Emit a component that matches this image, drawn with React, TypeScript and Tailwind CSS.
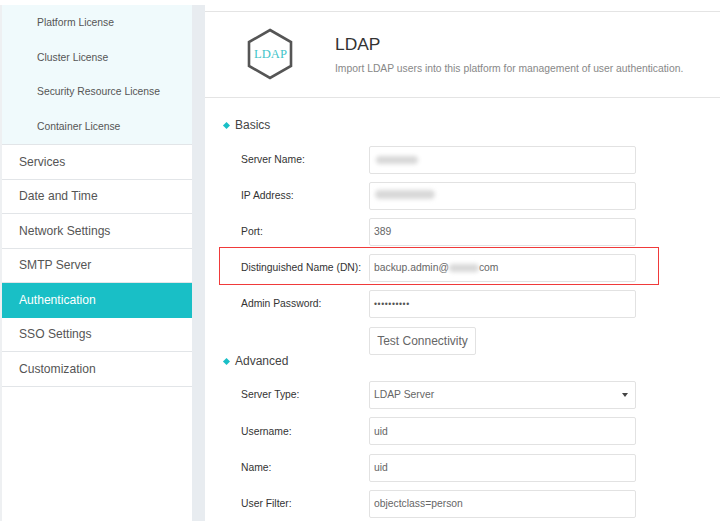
import React from 'react';

const subItems = ['Platform License', 'Cluster License', 'Security Resource License', 'Container License'];
const navItems = ['Services', 'Date and Time', 'Network Settings', 'SMTP Server', 'Authentication', 'SSO Settings', 'Customization'];

const Blur = ({ className }: { className: string }) => (
   <span className={`inline-block rounded-full bg-[#d8d8d8] blur-[2px] ${className}`} />
);

const Row = ({ label, children }: { label: string; children: React.ReactNode }) => (
   <div className="flex h-[28px] items-center">
      <label className="w-[128px] shrink-0 text-[10.35px] text-[#333]">{label}</label>
      <div className="flex h-full w-[267px] items-center rounded-[2px] border border-[#e2e2e2] bg-white pl-[4px] text-[10.35px] text-[#666]">
         {children}
      </div>
   </div>
);

const SectionTitle = ({ title }: { title: string }) => (
   <div className="flex items-center gap-[6px] pl-[19px] text-[12px] leading-[14px] text-[#444]">
      <span className="h-[5px] w-[5px] rotate-45 bg-[#19bfc6]" />
      {title}
   </div>
);

const App = () => {
   return (
      <div className="relative flex h-[521px] w-[720px] overflow-hidden bg-white font-['Liberation_Sans',Arial,sans-serif]">
         <aside className="mt-[5px] w-[192px] shrink-0 border-l-2 border-[#eef0f2] bg-white">
            <div className="border-b border-[#e2e5e8] bg-[#f0fafc] pt-[1px]">
               {subItems.map((item) => (
                  <div key={item} className="flex h-[34.5px] items-center pl-[35px] text-[10.35px] text-[#555]">
                     {item}
                  </div>
               ))}
            </div>
            {navItems.map((item) => (
               <div
                  key={item}
                  className={
                     item === 'Authentication'
                        ? 'flex h-[34.5px] items-center bg-[#19bfc6] pl-[17px] text-[12.1px] text-white'
                        : 'flex h-[34.5px] items-center border-b border-[#e2e5e8] pl-[17px] text-[12.1px] text-[#555]'
                  }
               >
                  {item}
               </div>
            ))}
         </aside>

         <div className="mt-[5px] w-[13px] shrink-0 bg-[#e8ecf0]" />

         <main className="flex-1">
            <div className="mt-[11px] flex h-[87px] items-center border-y border-[#e4e4e4]">
               <svg width="50" height="54" viewBox="0 0 50 54" className="ml-[40px] mt-[-2px] shrink-0">
                  <polygon points="25,3 46,15 46,39 25,51 4,39 4,15" fill="none" stroke="#555" strokeWidth="2.6" />
                  <text x="25.5" y="31" textAnchor="middle" fontFamily="Liberation Serif, serif" fontSize="12.6" fill="#3fc4c9">
                     LDAP
                  </text>
               </svg>
               <div className="ml-[40px] mt-[-1px]">
                  <h1 className="text-[17.4px] leading-[20px] text-[#333]">LDAP</h1>
                  <p className="mt-[9px] text-[10.33px] leading-[12px] text-[#888]">
                     Import LDAP users into this platform for management of user authentication.
                  </p>
               </div>
            </div>

            <div className="pt-[20px]">
               <SectionTitle title="Basics" />
               <div className="mt-[14px] flex flex-col gap-[8px] pl-[36px]">
                  <Row label="Server Name:">
                     <Blur className="ml-[2px] h-[8px] w-[42px]" />
                  </Row>
                  <Row label="IP Address:">
                     <Blur className="ml-[1px] mt-[-4px] h-[9px] w-[60px]" />
                  </Row>
                  <Row label="Port:">389</Row>
                  <Row label="Distinguished Name (DN):">
                     backup.admin@
                     <Blur className="h-[8px] w-[30px]" />
                     com
                  </Row>
                  <Row label="Admin Password:">
                     <span className="text-[8.5px] tracking-[0.6px] text-[#555]">••••••••••</span>
                  </Row>
               </div>
               <button className="ml-[164px] mt-[9px] h-[28px] w-[107px] rounded-[2px] border border-[#e2e2e2] bg-white text-[12px] text-[#666]">
                  Test Connectivity
               </button>
               <div className="mt-[-1px]">
                  <SectionTitle title="Advanced" />
               </div>
               <div className="mt-[13px] flex flex-col gap-[8.35px] pl-[36px]">
                  <Row label="Server Type:">
                     <span className="flex-1">LDAP Server</span>
                     <span className="mr-[7px] h-0 w-0 border-x-[3.5px] border-t-[4px] border-x-transparent border-t-[#444]" />
                  </Row>
                  <Row label="Username:">uid</Row>
                  <Row label="Name:">uid</Row>
                  <Row label="User Filter:">objectclass=person</Row>
               </div>
            </div>
         </main>

         <div className="pointer-events-none absolute left-[219px] top-[247px] h-[38px] w-[440px] border border-[#f03a3a]" />
      </div>
   );
};

export default App;
